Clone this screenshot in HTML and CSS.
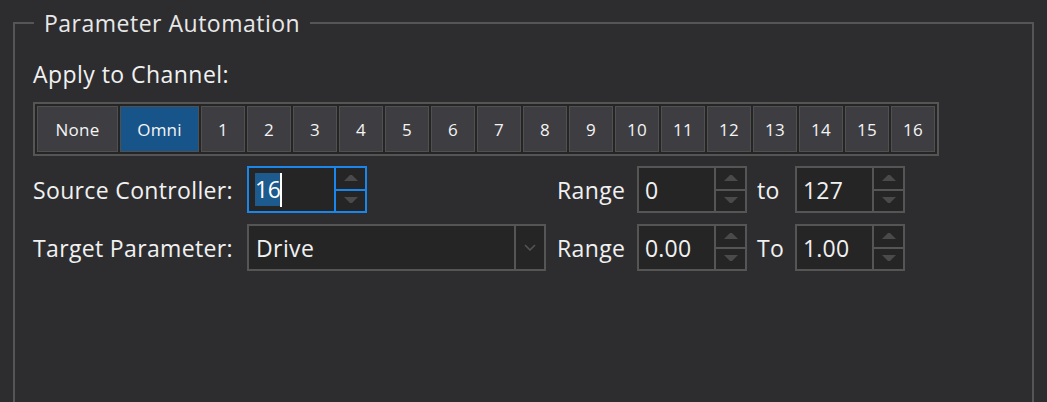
FILE: index.html
```html
<!DOCTYPE html>
<html>
<head>
<meta charset="utf-8">
<link rel="stylesheet" href="styles.css">
</head>
<body>
<fieldset class="group">
  <legend class="group-title">Parameter Automation</legend>
  <div class="content">
    <div class="caption">Apply to Channel:</div>
    <div class="channels">
      <button class="ch wide">None</button>
      <button class="ch wide2 active">Omni</button>
      <button class="ch">1</button>
      <button class="ch">2</button>
      <button class="ch">3</button>
      <button class="ch">4</button>
      <button class="ch">5</button>
      <button class="ch">6</button>
      <button class="ch">7</button>
      <button class="ch">8</button>
      <button class="ch">9</button>
      <button class="ch">10</button>
      <button class="ch">11</button>
      <button class="ch">12</button>
      <button class="ch">13</button>
      <button class="ch">14</button>
      <button class="ch">15</button>
      <button class="ch">16</button>
    </div>
    <div class="form">
      <div class="label">Source Controller:</div>
      <div class="cell-field">
        <div class="spin focused src">
          <div class="spin-value"><span class="sel">16</span><span class="caret"></span></div>
          <div class="spin-btns">
            <div class="spin-btn"><svg width="14" height="7" viewBox="0 0 14 7"><polygon points="0,6 6,0 8,0 14,6" /></svg></div>
            <div class="spin-btn"><svg width="14" height="7" viewBox="0 0 14 7"><polygon points="0,0 14,0 8,6 6,6" /></svg></div>
          </div>
        </div>
      </div>
      <div class="label range">Range</div>
      <div class="spin">
        <div class="spin-value">0</div>
        <div class="spin-btns">
          <div class="spin-btn"><svg width="14" height="7" viewBox="0 0 14 7"><polygon points="0,6 6,0 8,0 14,6" /></svg></div>
          <div class="spin-btn"><svg width="14" height="7" viewBox="0 0 14 7"><polygon points="0,0 14,0 8,6 6,6" /></svg></div>
        </div>
      </div>
      <div class="label to">to</div>
      <div class="spin">
        <div class="spin-value">127</div>
        <div class="spin-btns">
          <div class="spin-btn"><svg width="14" height="7" viewBox="0 0 14 7"><polygon points="0,6 6,0 8,0 14,6" /></svg></div>
          <div class="spin-btn"><svg width="14" height="7" viewBox="0 0 14 7"><polygon points="0,0 14,0 8,6 6,6" /></svg></div>
        </div>
      </div>

      <div class="label">Target Parameter:</div>
      <div class="cell-field">
        <div class="combo">
          <div class="combo-value">Drive</div>
          <div class="combo-btn"><svg width="12" height="7" viewBox="0 0 12 7"><polyline points="1,1 6,6 11,1" /></svg></div>
        </div>
      </div>
      <div class="label range">Range</div>
      <div class="spin">
        <div class="spin-value">0.00</div>
        <div class="spin-btns">
          <div class="spin-btn"><svg width="14" height="7" viewBox="0 0 14 7"><polygon points="0,6 6,0 8,0 14,6" /></svg></div>
          <div class="spin-btn"><svg width="14" height="7" viewBox="0 0 14 7"><polygon points="0,0 14,0 8,6 6,6" /></svg></div>
        </div>
      </div>
      <div class="label to">To</div>
      <div class="spin">
        <div class="spin-value">1.00</div>
        <div class="spin-btns">
          <div class="spin-btn"><svg width="14" height="7" viewBox="0 0 14 7"><polygon points="0,6 6,0 8,0 14,6" /></svg></div>
          <div class="spin-btn"><svg width="14" height="7" viewBox="0 0 14 7"><polygon points="0,0 14,0 8,6 6,6" /></svg></div>
        </div>
      </div>
    </div>
  </div>
</fieldset>
</body>
</html>
```

FILE: styles.css
```css
html, body {
  margin: 0;
  padding: 0;
  height: 402px;
  overflow: hidden;
  background: #2d2d30;
}
body {
  font-family: "Open Sans", "Noto Sans", sans-serif;
  color: #f1f1f1;
}
.group {
  margin: 9px 13px 0 13px;
  padding: 0;
  border: 2px solid #555555;
  border-bottom-width: 0;
  height: 393px;
  box-sizing: border-box;
  min-width: 0;
}
.group-title {
  margin-left: 19px;
  padding: 0 10px;
  font-size: 23px;
  letter-spacing: 0.5px;
  line-height: 28px;
  color: #e8e8e8;
}
.content {
  padding: 22px 0 0 18px;
  display: flex;
  flex-direction: column;
  align-items: flex-start;
}
.caption {
  font-size: 23px;
  letter-spacing: 0.45px;
  line-height: 30px;
}
.channels {
  margin-top: 13px;
  display: flex;
  gap: 2px;
  padding: 2px;
  border: 2px solid #555555;
  background: #252526;
}
.ch {
  width: 44px;
  height: 46px;
  margin: 0;
  padding: 0;
  border: 1px solid #505050;
  background: #3e3e42;
  color: #f4f4f4;
  font-family: "Open Sans", "Noto Sans", sans-serif;
  font-size: 17px;
  font-weight: 500;
  letter-spacing: 0.2px;
}
.ch.wide { width: 81px; }
.ch.wide2 { width: 79px; }
.ch.active {
  background: #17548a;
}
.form {
  margin-top: 10px;
  display: grid;
  grid-template-columns: 214px 299px 91px 110px 48px 110px;
  grid-auto-rows: 47px;
  row-gap: 11px;
  align-items: center;
}
.label {
  font-size: 23px;
  letter-spacing: 0.35px;
  line-height: 30px;
  white-space: nowrap;
}
.label.range { padding-left: 11px; }
.label.to { padding-left: 10px; }
.cell-field {
  display: flex;
  height: 47px;
}
.spin {
  box-sizing: border-box;
  height: 47px;
  display: flex;
  border: 2px solid #555555;
  background: #252526;
}
.spin.src { width: 120px; }
.spin-value {
  flex: 1;
  display: flex;
  align-items: center;
  padding-left: 6px;
  font-size: 23px;
  letter-spacing: 0.2px;
  border-right: 2px solid #555555;
}
.spin-btns {
  width: 29px;
  display: flex;
  flex-direction: column;
}
.spin-btn {
  flex: 1;
  display: flex;
  align-items: center;
  justify-content: center;
}
.spin-btn + .spin-btn {
  border-top: 2px solid #555555;
}
.spin-btn svg polygon { fill: #4a4a4a; }
.spin.focused {
  border-color: #1a86ec;
}
.spin.focused .spin-value { border-right-color: #1a86ec; }
.spin.focused .spin-btn + .spin-btn { border-top-color: #1a86ec; }
.sel {
  background: #1d5a8d;
  color: #ffffff;
  line-height: 33px;
  letter-spacing: -0.5px;
}
.caret {
  display: inline-block;
  width: 2px;
  height: 34px;
  background: #ffffff;
}
.combo {
  box-sizing: border-box;
  width: 299px;
  height: 47px;
  display: flex;
  border: 2px solid #555555;
  background: #252526;
}
.combo-value {
  flex: 1;
  display: flex;
  align-items: center;
  padding-left: 7px;
  font-size: 23px;
  letter-spacing: 0.4px;
  border-right: 2px solid #555555;
}
.combo-btn {
  width: 28px;
  display: flex;
  align-items: center;
  justify-content: center;
}
.combo-btn polyline {
  fill: none;
  stroke: #555555;
  stroke-width: 1.5;
}
```
